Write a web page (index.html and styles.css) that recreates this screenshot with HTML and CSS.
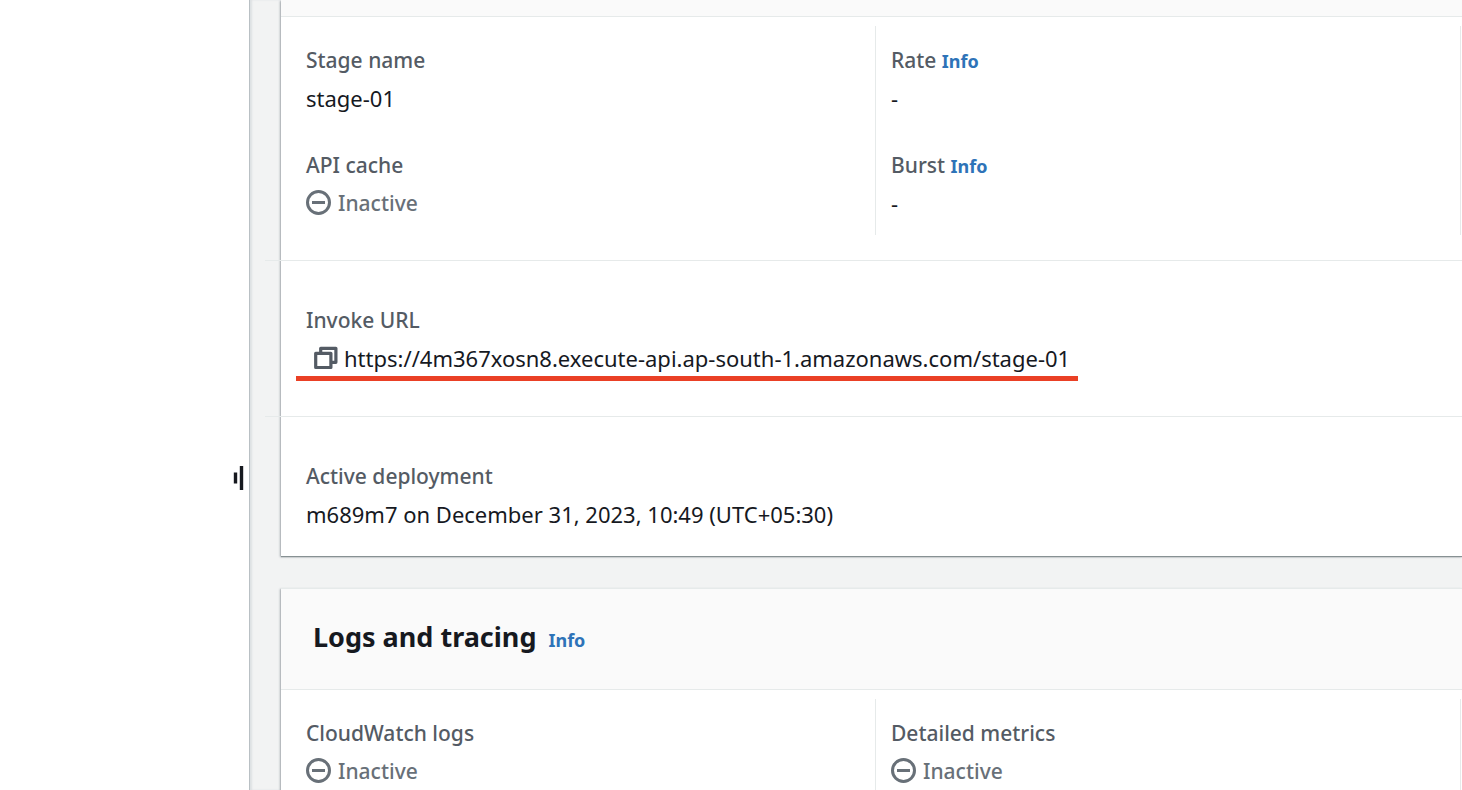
FILE: index.html
```
<!DOCTYPE html>
<html lang="en">
<head>
<meta charset="utf-8">
<title>Stage details</title>
<link rel="stylesheet" href="styles.css">
</head>
<body>
<svg class="sprite" aria-hidden="true">
  <symbol id="inactive" viewBox="0 0 26 26">
    <circle cx="12.5" cy="12.5" r="11" fill="none" stroke="currentColor" stroke-width="3"/>
    <path d="M6 12.5h13" stroke="currentColor" stroke-width="3"/>
  </symbol>
</svg>
<div class="app">
  <aside class="sidebar">
    <button class="handle" type="button" aria-label="Resize panel">
      <svg width="12" height="24" viewBox="0 0 12 24"><path d="M2.5 6.5v11" stroke="#16191f" stroke-width="3.4"/><path d="M8.5 0v24" stroke="#16191f" stroke-width="3.4"/></svg>
    </button>
  </aside>
  <main class="main">
    <section class="card">
      <div class="strip"></div>
      <div class="columns">
        <dl class="column">
          <div><dt>Stage name</dt><dd>stage-01</dd></div>
          <div><dt>API cache</dt><dd class="status"><svg class="icon"><use href="#inactive"/></svg>Inactive</dd></div>
        </dl>
        <dl class="column">
          <div><dt>Rate <a class="info" href="#rate">Info</a></dt><dd>-</dd></div>
          <div><dt>Burst <a class="info" href="#burst">Info</a></dt><dd>-</dd></div>
        </dl>
      </div>
      <dl class="row">
        <dt>Invoke URL</dt>
        <dd class="url">
          <button class="copy" type="button" aria-label="Copy invoke URL">
            <svg width="24" height="24" viewBox="0 0 24 24" fill="none" stroke="currentColor" stroke-width="3.2" stroke-linejoin="round"><path d="M1.7 7.3h15.2v14.2h-15.2z"/><path d="M6.7 7.3v-5h15.2v14h-5"/></svg>
          </button>
          <span>https://4m367xosn8.execute-api.ap-south-1.amazonaws.com/stage-01</span>
        </dd>
      </dl>
      <dl class="row row-last">
        <dt>Active deployment</dt>
        <dd>m689m7 on December 31, 2023, 10:49 (UTC+05:30)</dd>
      </dl>
    </section>
    <section class="card">
      <header class="card-header">
        <h2>Logs and tracing</h2>
        <a class="info" href="#logs">Info</a>
      </header>
      <div class="columns">
        <dl class="column">
          <div><dt>CloudWatch logs</dt><dd class="status"><svg class="icon"><use href="#inactive"/></svg>Inactive</dd></div>
        </dl>
        <dl class="column">
          <div><dt>Detailed metrics</dt><dd class="status"><svg class="icon"><use href="#inactive"/></svg>Inactive</dd></div>
        </dl>
      </div>
    </section>
  </main>
</div>
</body>
</html>
```
FILE: styles.css
```
* { box-sizing: border-box; }
body {
  margin: 0;
  overflow: hidden;
  background: #fff;
  color: #16191f;
  font: 500 21px/38px "Noto Sans", "Open Sans", sans-serif;
}
dl, dd, h2 { margin: 0; }
button { padding: 0; border: 0; background: none; cursor: pointer; }
svg { display: block; }
.sprite { position: absolute; width: 0; height: 0; }

.app { display: flex; height: 100vh; }
.sidebar {
  display: flex;
  flex: 0 0 250px;
  align-items: flex-start;
  justify-content: flex-end;
  padding: 466px 4px 0 0;
  border-right: 1px solid #b9c0c4;
}
.main {
  display: flex;
  flex: 1;
  flex-direction: column;
  gap: 32px;
  min-width: 0;
  overflow: hidden;
  padding-left: 31px;
  background: #f2f3f3;
  box-shadow: inset 2px 0 2px #dde1e3;
}
.card {
  flex: none;
  background: #fff;
  box-shadow: 0 1px 1px #879193, -1px 1px 2px #aab1b5;
}
.strip {
  height: 17px;
  background: #fafafa;
  border-bottom: 1px solid #e6eaea;
}
.columns {
  display: grid;
  grid-template-columns: 1fr 1fr;
  padding: 9px 1px 25px 10px;
}
.column {
  display: flex;
  flex-direction: column;
  gap: 29px;
  padding: 15px 15px 13px;
  border-right: 1px solid #e6eaea;
}
dt { color: #545b64; }
dd { font-size: 22px; font-weight: 400; }
.info { color: #2e73b8; font-size: 18px; font-weight: 700; line-height: 1; text-decoration: none; }
.status { display: flex; align-items: center; gap: 6px; color: #687078; font-size: 21px; font-weight: 500; }
.icon { width: 26px; height: 26px; }

.row {
  position: relative;
  padding: 41px 25px 39px;
}
.row::before {
  content: "";
  position: absolute;
  top: 0;
  right: 0;
  left: -16px;
  height: 1px;
  background: #e6eaea;
}
.row-last { padding-bottom: 23px; }
.url {
  display: flex;
  position: relative;
  align-items: center;
  gap: 6px;
  width: fit-content;
  padding-left: 8px;
}
.url::after {
  content: "";
  position: absolute;
  right: -8px;
  bottom: -4px;
  left: -10px;
  height: 5px;
  background: #ea4025;
}
.copy { color: #545b64; }

.card-header {
  display: flex;
  align-items: baseline;
  gap: 12px;
  padding: 29px 32px 33px;
  background: #fafafa;
  border-top: 1px solid #e6eaea;
  border-bottom: 1px solid #e6eaea;
}
h2 { font-size: 27px; font-weight: 700; line-height: 38px; }
```
